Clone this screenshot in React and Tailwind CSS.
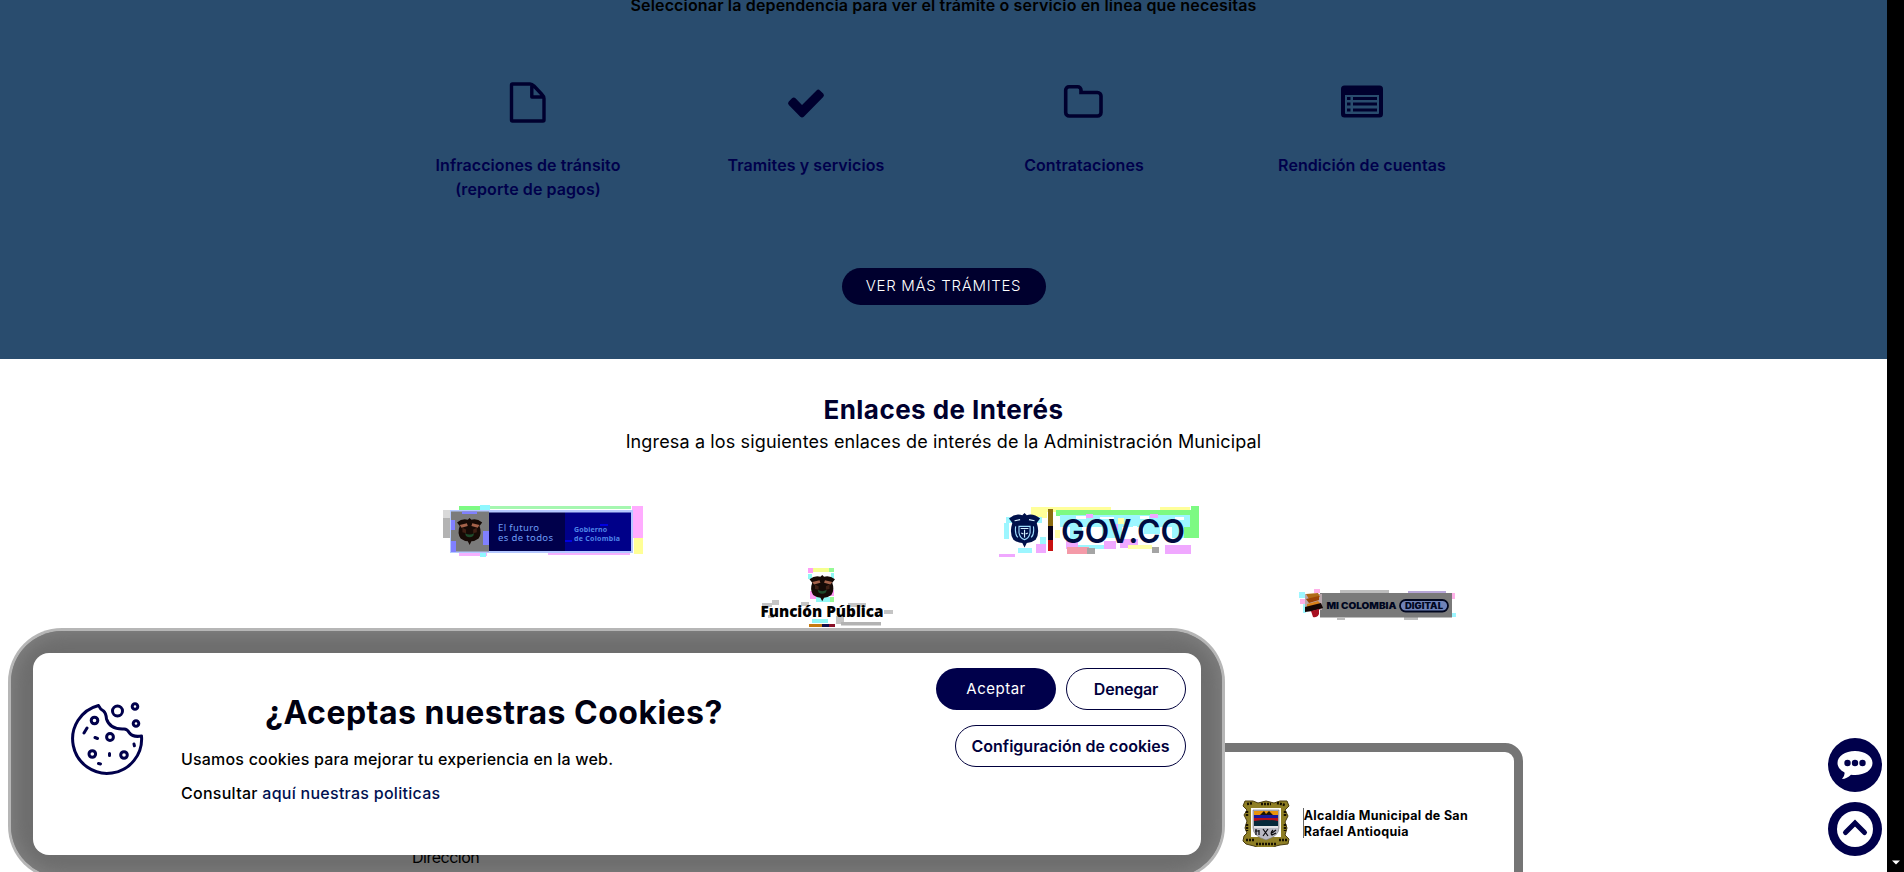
const sans = "font-['Inter','Noto_Sans',sans-serif]";

const services = [
  { label: ["Infracciones de tránsito", "(reporte de pagos)"], icon: "file" },
  { label: ["Tramites y servicios"], icon: "check" },
  { label: ["Contrataciones"], icon: "folder" },
  { label: ["Rendición de cuentas"], icon: "list" },
];

function ServiceIcon({ name }) {
  return (
    <svg viewBox="0 0 42 42" className="h-[42px] w-[42px]" fill="none" stroke="#00002e">
      {name === "file" && (
        <path d="M5.500 3h17.500q2 0 4 2l8 8.500q2 2 2 4v21.500a1 1 0 0 1-1 1h-30.500a1 1 0 0 1-1-1v-35a1 1 0 0 1 1-1zM24.800 3.500v12.500h12" strokeWidth="3.400" strokeLinejoin="round" />
      )}
      {name === "check" && (
        <path d="M3.800 20.500l3.200-3.200q1.800-1.600 3.500 0l6.500 6.600l14.500-14.500q1.800-1.600 3.500 0l3.200 3.200q1.600 1.800 0 3.500l-19.400 19.600q-1.800 1.600-3.500 0l-11.500-11.700q-1.600-1.800 0-3.500z" fill="#00002e" stroke="none" />
      )}
      {name === "folder" && (
        <path d="M2.700 9a3.300 3.300 0 0 1 3.300-3.300h8.700a3.300 3.300 0 0 1 3.300 3.300v2.500h16.500a3.500 3.500 0 0 1 3.500 3.500v16.500a3.500 3.500 0 0 1-3.500 3.500h-28.300a3.500 3.500 0 0 1-3.500-3.500z" strokeWidth="3.600" />
      )}
      {name === "list" && (
        <g stroke="none" fill="#00002e">
          <path fillRule="evenodd" d="M3.500 4.500h35a3.500 3.500 0 0 1 3.500 3.500v25a3.500 3.500 0 0 1-3.500 3.500h-35a3.500 3.500 0 0 1-3.500-3.500v-25a3.500 3.500 0 0 1 3.500-3.500zM4 14v18q0 1 1 1h32q1 0 1-1v-18z" />
          <path d="M6 16h3.500v3h-3.500zM6 21.500h3.500v3h-3.500zM6 27.500h3.500v3h-3.500zM12 16h24v3h-24zM12 21.500h24v3h-24zM12 27.500h24v3h-24z" />
        </g>
      )}
    </svg>
  );
}

function Condor() {
  return (
    <g>
      <path d="M0 6Q6 1 12 3L14 1L16 3Q22 1 28 6L25 10Q28 18 24 24Q20 27 16 27L14 31L12 27Q8 27 4 24Q0 18 3 10Z" fill="#160a06" />
      <path d="M3 9l8-2 1 3-7 2zM25 9l-8-2-1 3 7 2z" fill="#a5624a" />
      <path d="M6 12l4 2v4l-4-1zM22 12l-4 2v4l4-1z" fill="#3f1f14" />
      <path d="M9 18q5 3 10 0l-1 3q-4 3-8 0z" fill="#1d4a2b" />
    </g>
  );
}

function FuturoLogo() {
  return (
    <svg viewBox="440 500 210 62" className="h-[62px] w-[210px]">
      <rect x="459" y="506" width="30" height="4" fill="#7dfa83" />
      <rect x="489" y="506" width="142" height="3" fill="#a5f7b0" />
      <rect x="480" y="505" width="10" height="6" fill="#8ff8ff" />
      <rect x="443" y="510" width="7" height="8" fill="#d9d9d9" />
      <rect x="443" y="518" width="8" height="20" fill="#b3b3b3" />
      <rect x="632" y="506" width="11" height="32" fill="#ffacff" />
      <rect x="634" y="538" width="9" height="16" fill="#ffff96" />
      <path d="M459 553h28v3h-28zM548 552h82v3h-82z" fill="#f5b0ff" />
      <rect x="480" y="551" width="6" height="6" fill="#8ff8ff" />
      <rect x="450" y="510" width="183" height="43" fill="#b4c8ff" />
      <rect x="451" y="511.500" width="38" height="40" fill="#7b7b7b" />
      <path d="M451 520h4v10h-4zM451 541h5v11h-5zM462 511.500h15v2.500h-15zM483 531h6v14h-6z" fill="#8080ff" />
      <rect x="489" y="512.500" width="76" height="38.500" fill="#00004b" />
      <rect x="565" y="512.500" width="66" height="38.500" fill="#000089" />
      <path d="M600 524h8v2h-8zM565 540h7v2h-7z" fill="#0000e0" />
      <g transform="translate(457 517) scale(.9)"><Condor /></g>
      <g fontFamily="Noto Sans, sans-serif">
        <text x="498" y="531" fontSize="9.500" fill="#6f9df5" textLength="41">El futuro</text>
        <text x="498" y="541.300" fontSize="9.500" fill="#6f9df5" textLength="55">es de todos</text>
        <text x="574" y="532" fontSize="7" fontWeight="700" fill="#4f86e8" textLength="33">Gobierno</text>
        <text x="574" y="540.500" fontSize="7" fontWeight="700" fill="#4f86e8" textLength="46">de Colombia</text>
      </g>
    </svg>
  );
}

function FuncionLogo() {
  return (
    <svg viewBox="757 560 138 70" className="h-[70px] w-[138px]">
      <path d="M808 568h5v5h-5zM810 591h6v8h-6zM829 590h5v6h-5z" fill="#ff9df5" />
      <path d="M813 568h16v4h-16z" fill="#f6ff8f" />
      <path d="M808 574h4v5h-4zM831 573h3v8h-3zM816 597h14v5h-14zM812 619h16v4h-16z" fill="#8ff8f5" />
      <path d="M829 568h5v4h-5zM830 597h4v5h-4z" fill="#96fa96" />
      <path d="M772 600h7v5h-7zM762 603h10v4h-10zM848 603h18v4h-18zM801 602h8v4h-8zM884 610h9v4h-9zM836 616h8v8h-8zM768 615h6v3h-6z" fill="#c4c4c4" />
      <rect x="841" y="622" width="40" height="3.500" fill="#b3b3b3" />
      <g transform="translate(809.500 574) scale(.91 .88)"><Condor /></g>
      <text x="760.500" y="617" fontSize="16.500" fontWeight="800" fontFamily="Open Sans, sans-serif" fill="#000" textLength="123" lengthAdjust="spacingAndGlyphs">Función Pública</text>
      <rect x="809" y="624" width="13" height="3" fill="#c77b10" />
      <rect x="822" y="624" width="7" height="3" fill="#12104a" />
      <rect x="829" y="624" width="6" height="3" fill="#8a1028" />
    </svg>
  );
}

function GovLogo() {
  return (
    <svg viewBox="998 500 206 62" className="h-[62px] w-[206px]">
      <path d="M1031 507h80v5h-80zM1031 512h16v6h-16zM1160 507h30v4h-30z" fill="#ffff9a" />
      <path d="M1056 510h124v6h-124zM1191 506h8v32h-8zM1180 510h12v28h-12z" fill="#7dfa83" />
      <path d="M1060 515h130v12h-130zM1070 527h12v12h-12zM1102 522h20v16h-20zM1144 522h16v12h-16zM1172 524h12v14h-12zM1006 517h36v6h-36zM1004 523h5v16h-5zM1040 537h6v8h-6zM1018 548h14v5h-14zM1066 545h40v4h-40z" fill="#9df6ff" />
      <path d="M1086 514h7v4h-7zM1120 539h18v9h-18zM1066 541h12v8h-12zM1165 545h26v9h-26zM1036 544h10v9h-10zM1150 514h8v4h-8zM1104 541h12v8h-12zM1112 524h6v6h-6zM999 554h16v3h-16z" fill="#f0a8ff" />
      <path d="M1067 547h22v7h-22z" fill="#f49aa8" />
      <path d="M1055 530h5v8h-5zM1118 518h6v6h-6zM1128 545h24v4h-24z" fill="#ffffa8" />
      <path d="M1076 516h10v3h-10zM1100 517h14v2h-14zM1140 516h9v3h-9zM1097 530h4v4h-4zM1133 526h4v4h-4zM1163 540h3v5h-3zM1175 517h9v3h-9z" fill="#fff" />
      <path d="M1087 548h8v6h-8zM1152 547h7v6h-7z" fill="#a4a4a4" />
      <g transform="translate(1009 513) scale(1.110)">
        <path d="M0 5Q6 0 12 2L14 0L16 2Q22 0 28 5L25 9Q28 18 24 24Q20 27 16 27L14 31L12 27Q8 27 4 24Q0 18 3 9Z" fill="#00104a" />
        <path d="M6 12q-1 7 2 10M22 12q1 7-2 10M9 12v6q1 5 5 6q4-1 5-6v-6z" fill="none" stroke="#9fdcff" strokeWidth="1" />
        <path d="M10.500 14h7M14 15v7M11 18l2 1M17 18l-2 1M5 7l5-1M23 7l-5-1" stroke="#d5f0ff" strokeWidth="1" />
      </g>
      <rect x="1048" y="509" width="5" height="17" fill="#8a6a10" />
      <rect x="1048" y="526" width="5" height="14" fill="#060018" />
      <rect x="1048" y="540" width="5" height="11" fill="#c81010" />
      <text x="1061" y="543" fontSize="33" fontWeight="600" fontFamily="Inter, sans-serif" fill="#000a40" textLength="124" lengthAdjust="spacingAndGlyphs">GOV.CO</text>
    </svg>
  );
}

function ColombiaLogo() {
  return (
    <svg viewBox="1299 585 160 38" className="h-[38px] w-[160px]">
      <path d="M1299 592h6v6h-6zM1448 613h8v4h-8zM1303 603h3v10h-3z" fill="#9df6ff" />
      <path d="M1449 593h6v6h-6zM1300 599h6v5h-6zM1314 589h6v4h-6z" fill="#ffb0e8" />
      <path d="M1340 590h49v3h-49zM1337 618h8v2h-8zM1404 617h14v3h-14z" fill="#bdbdbd" />
      <path d="M1408 591h38v2h-38z" fill="#b7a6d8" />
      <rect x="1320" y="593" width="132" height="24.500" fill="#7a7a7a" />
      <rect x="1305" y="594" width="17" height="16" fill="#b9a7ad" />
      <path d="M1306 594l12-1 2 4-11 2z" fill="#b06a18" />
      <path d="M1306 599l13-3v4l-10 3z" fill="#9c4408" />
      <path d="M1307 604l11-3 3 3-14 5z" fill="#d8801a" />
      <path d="M1305 607l16-4 2 5-10 3-8 1z" fill="#140505" />
      <path d="M1311 611l8-2v5q-2 4-6 3z" fill="#a80f20" />
      <g fontFamily="Inter, sans-serif" fontWeight="900" fill="#00061f">
        <text x="1326.500" y="608.800" fontSize="8.800" textLength="70" lengthAdjust="spacingAndGlyphs">MI COLOMBIA</text>
        <rect x="1400" y="600" width="48" height="11.500" rx="5.700" fill="#6f82b8" stroke="#00061f" strokeWidth="1.800" />
        <text x="1405" y="608.800" fontSize="8.400" textLength="38" lengthAdjust="spacingAndGlyphs">DIGITAL</text>
      </g>
    </svg>
  );
}

function TownCrest() {
  return (
    <svg viewBox="0 0 48 48" className="h-12 w-12">
      <path d="M3 2h8l5 2 8-2 8 2 6-2h7l2 5-4 4 3 6-3 6 2 6-2 7 4 4-1 5-8 1-4 1-4 2h-13l-5-2-8-2-3-3 1-5 3-3-2-5 2-7-3-6 3-5-4-4z" fill="#8f7f25" stroke="#4a3d10" />
      <path d="M9 9h30v29h-30z" fill="#fff" />
      <path d="M5 5l6-1M19 5h10M35 4l8 2M5 12v6M43 12v6M5 25v7M43 25v7M4 41h8M14 45h20M37 41h8" stroke="#171000" strokeWidth="2.500" strokeDasharray="2 1" />
      <path d="M11 11h26v18q0 8-13 12q-13-4-13-12z" fill="#b9b9c4" stroke="#777" strokeWidth=".6" />
      <path d="M12 12h24v4h-24z" fill="#e8930c" />
      <path d="M12 16h24v3h-24z" fill="#18189a" />
      <path d="M12 19h24v3h-24z" fill="#b3101c" />
      <path d="M12 22q12-2 24 0v5h-24z" fill="#06293a" />
      <path d="M18 16l4-4 2 3 3-3 4 4z" fill="#1b1408" />
      <path d="M14 30v6M13 32h4M17 31v5M21 30l5 7M26 30l-5 7M31 31q-3 3-1 5l4-2M34 31l-4 3" stroke="#08080c" strokeWidth="1.200" fill="none" />
      <path d="M12 28h24" stroke="#fff" strokeWidth="1.200" />
    </svg>
  );
}

function CookieIcon() {
  return (
    <svg viewBox="71 702 73 74" className="h-[74px] w-[73px]" fill="none" stroke="#00004b" strokeWidth="3" strokeLinecap="round" strokeLinejoin="round">
      <path d="M98.500 705.500A34.500 34.500 0 1 0 141.500 736Q133 737.500 129.500 733Q127 728.500 123.500 729Q110 729.500 106.500 719Q106 713 103.500 711Q100 709 98.500 705.500Z" />
      <circle cx="117.500" cy="711" r="5" />
      <circle cx="135" cy="706.500" r="2.800" />
      <circle cx="136" cy="723.500" r="2.800" />
      <circle cx="94.500" cy="720.500" r="3.300" />
      <circle cx="110" cy="737" r="3.400" />
      <circle cx="92.300" cy="754" r="3.300" />
      <circle cx="124" cy="755" r="3.300" />
      <path d="M87 728l-3 5M95 737.500l2.500 1M109.500 753.500v2M98.500 763.500l2 .5M134 744l.4 1.800" />
    </svg>
  );
}

export default function App() {
  return (
    <div className={`flex h-[872px] w-[1904px] overflow-hidden bg-white ${sans}`}>
      <main className="relative flex h-full w-[1887px] flex-col overflow-hidden">
        <section className="flex h-[359px] shrink-0 flex-col items-center bg-[#294c6e]">
          <p className="-mt-[7px] h-6 whitespace-nowrap text-[16px] font-semibold leading-6 tracking-[0.16px] text-black">
            Seleccionar la dependencia para ver el trámite o servicio en línea que necesitas
          </p>
          <ul className="ml-[3px] mt-[64px] grid w-[1112px] grid-cols-4">
            {services.map((s) => (
              <li key={s.icon} className="flex flex-col items-center text-[16px] font-semibold leading-6 tracking-[0.080px] text-[#00004b]">
                <ServiceIcon name={s.icon} />
                <p className="mt-[30px] flex flex-col items-center whitespace-nowrap">
                  {s.label.map((l) => <span key={l}>{l}</span>)}
                </p>
              </li>
            ))}
          </ul>
          <button className="mt-[67px] h-[37px] w-[204px] rounded-full bg-[#00002e] text-[15px] font-light tracking-[0.68px] text-white">VER MÁS TRÁMITES</button>
        </section>
        <section className="flex shrink-0 flex-col items-center pt-[35px]">
          <h2 className="whitespace-nowrap text-[26px] font-bold leading-8 tracking-[0.450px] text-[#00002e]">Enlaces de Interés</h2>
          <p className="mt-1 whitespace-nowrap text-[18px] leading-6 tracking-[0.140px] text-black">Ingresa a los siguientes enlaces de interés de la Administración Municipal</p>
        </section>
        <section className="mt-[46px] flex h-[130px] shrink-0 items-start pl-[440px]">
          <FuturoLogo />
          <div className="ml-[107px] mt-[60px]"><FuncionLogo /></div>
          <div className="ml-[103px]"><GovLogo /></div>
          <div className="ml-[95px] mt-[85px]"><ColombiaLogo /></div>
        </section>
        <footer className="ml-[372px] mt-[113px] flex h-[160px] w-[1151px] shrink-0 justify-end rounded-[18px] border-[9px] border-[#757575] pr-[46px] pt-[47px]">
          <div className="flex h-12 items-start">
            <TownCrest />
            <p className="ml-[13px] mt-[9px] h-[30px] whitespace-nowrap border-l border-[#666] text-[12.500px] font-bold leading-[15.500px] tracking-[0.300px] text-black">
              Alcaldía Municipal de San<br />Rafael Antioquia
            </p>
          </div>
        </footer>

        <div className="absolute left-[8px] top-[628px] h-[252px] w-[1217px] rounded-[54px] bg-[#b6b6b6] p-[3px]">
          <div className="h-full rounded-[51px] bg-[#6e6e6e] shadow-[inset_0_0_14px_5px_#7e7e7e]" />
        </div>
        <p className="absolute left-[412px] top-[846px] text-[16px] leading-[22px] tracking-[-0.500px] text-black">Dirección</p>
        <aside className="absolute left-[33px] top-[653px] flex h-[202px] w-[1168px] rounded-[16px] bg-white">
          <div className="ml-[38px] mt-[49px]"><CookieIcon /></div>
          <div className="ml-[37px] mt-[40px] w-[626px]">
            <h3 className="whitespace-nowrap text-center text-[32px] font-bold leading-10 tracking-[0.480px] text-[#000010]">¿Aceptas nuestras Cookies?</h3>
            <p className="mt-[14px] whitespace-nowrap text-[16px] font-medium leading-6 tracking-[0.190px] text-black">Usamos cookies para mejorar tu experiencia en la web.</p>
            <p className="mt-[10px] whitespace-nowrap text-[16px] font-medium leading-6 tracking-[0.270px] text-black">
              Consultar <a className="text-[#001050]">aquí nuestras politicas</a>
            </p>
          </div>
          <div className="ml-auto mr-[15px] mt-[15px] flex w-[250px] flex-wrap content-start justify-end gap-x-[10px] gap-y-[15px] text-[16px] font-semibold text-[#00003c]">
            <button className="h-[42px] w-[120px] rounded-full bg-[#00004b] text-[15px] font-normal tracking-[0.500px] text-white">Aceptar</button>
            <button className="h-[42px] w-[120px] rounded-full border border-[#00003c] tracking-[-0.200px]">Denegar</button>
            <button className="h-[42px] w-[231px] whitespace-nowrap rounded-full border border-[#00003c]">Configuración de cookies</button>
          </div>
        </aside>

        <div className="absolute left-[1828px] top-[738px] flex flex-col gap-[10px]">
          <svg viewBox="0 0 54 54" className="h-[54px] w-[54px]">
            <circle cx="27" cy="27" r="27" fill="#00004b" />
            <path d="M27 13c10 0 17.500 5 17.500 12s-7.500 12-17.500 12q-2 0-4-.3q-4 4-9 4.300q3-3 2.500-6.500c-4-2.200-7-5.500-7-9.500c0-7 7.500-12 17.500-12z" fill="#fff" />
            <g fill="#00004b"><circle cx="19.500" cy="25" r="3.200" /><circle cx="27" cy="25" r="3.200" /><circle cx="34.500" cy="25" r="3.200" /></g>
          </svg>
          <svg viewBox="0 0 54 54" className="h-[54px] w-[54px]">
            <circle cx="27" cy="27" r="27" fill="#00004b" />
            <circle cx="27" cy="27" r="18" fill="#fff" />
            <path d="M17.500 30.500l9.500-9.500l9.500 9.500" fill="none" stroke="#00004b" strokeWidth="5" strokeLinecap="round" />
          </svg>
        </div>
      </main>
      <div className="flex w-[17px] flex-col items-center justify-end bg-black pb-[7px]">
        <svg viewBox="0 0 8 5" className="h-[5px] w-[8px]"><path d="M0 .5h8l-4 4z" fill="#fff" /></svg>
      </div>
    </div>
  );
}
